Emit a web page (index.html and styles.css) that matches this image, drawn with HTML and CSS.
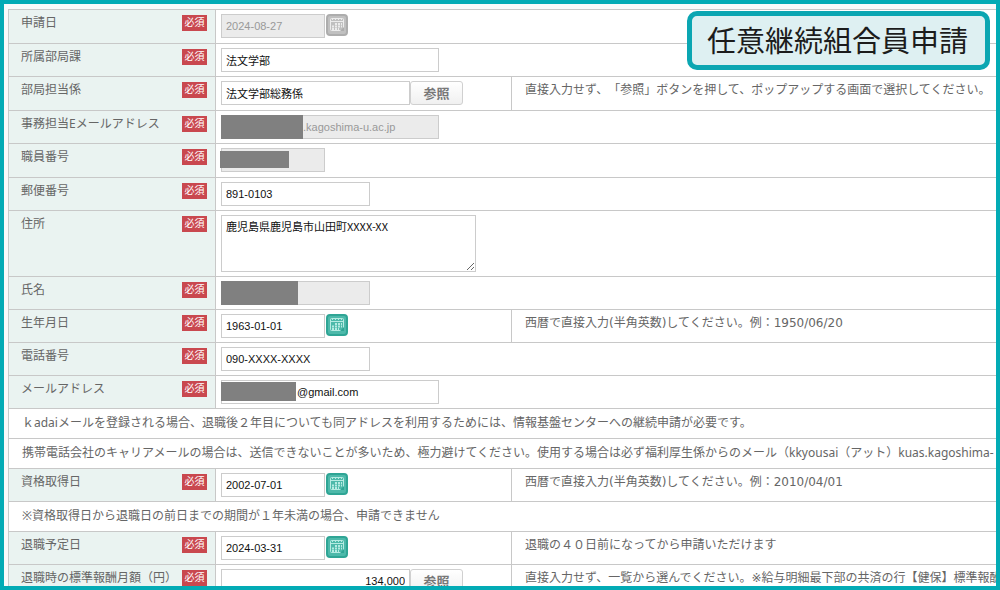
FILE: index.html
```html
<!DOCTYPE html>
<html lang="ja">
<head>
<meta charset="utf-8">
<title>任意継続組合員申請</title>
<link rel="stylesheet" href="styles.css">
</head>
<body>
<svg class="defs" aria-hidden="true">
  <symbol id="calendar" viewBox="0 0 22 22">
    <rect class="cal-edge" x="1" y="1" width="20" height="20" rx="3"/>
    <rect class="cal-face" x="4.5" y="4.5" width="13" height="12" rx="1"/>
    <path class="cal-line" d="M4 7.5h14M6.500 4v2M9.500 4v2M12.500 4v2M15.500 4v2"/>
    <path class="cal-days" d="M9 10h7M6 12.500h10M6 15h7"/>
    <path class="cal-corner" d="M18 13v4h-4z"/>
  </symbol>
</svg>
<main class="frame">
  <h1 class="title">任意継続組合員申請</h1>
  <form>
  <table class="form-table">
    <colgroup><col class="col-label"><col class="col-value"><col></colgroup>
    <tr class="tall">
      <th><div class="head"><label for="f1">申請日</label><span class="badge">必須</span></div></th>
      <td colspan="2"><div class="field"><input id="f1" class="w-date" value="2024-08-27" disabled><button type="button" class="cal" aria-label="カレンダー" disabled><svg><use href="#calendar"/></svg></button></div></td>
    </tr>
    <tr>
      <th><div class="head"><label for="f2">所属部局課</label><span class="badge">必須</span></div></th>
      <td colspan="2"><div class="field"><input id="f2" class="w-long" value="法文学部"></div></td>
    </tr>
    <tr class="tall">
      <th><div class="head"><label for="f3">部局担当係</label><span class="badge">必須</span></div></th>
      <td><div class="field"><input id="f3" class="w-ref" value="法文学部総務係"><button type="button" class="ref">参照</button></div></td>
      <td class="help">直接入力せず、「参照」ボタンを押して、ポップアップする画面で選択してください。</td>
    </tr>
    <tr>
      <th><div class="head"><label for="f4">事務担当Eメールアドレス</label><span class="badge">必須</span></div></th>
      <td colspan="2"><div class="field"><input id="f4" class="w-long after-mask" value=".kagoshima-u.ac.jp" disabled><span class="mask mask-l"></span></div></td>
    </tr>
    <tr class="tall">
      <th><div class="head"><label for="f5">職員番号</label><span class="badge">必須</span></div></th>
      <td colspan="2"><div class="field"><input id="f5" class="w-date" disabled><span class="mask mask-s"></span></div></td>
    </tr>
    <tr>
      <th><div class="head"><label for="f6">郵便番号</label><span class="badge">必須</span></div></th>
      <td colspan="2"><div class="field"><input id="f6" class="w-mid" value="891-0103"></div></td>
    </tr>
    <tr>
      <th><div class="head"><label for="f7">住所</label><span class="badge">必須</span></div></th>
      <td colspan="2"><div class="field"><textarea id="f7">鹿児島県鹿児島市山田町XXXX-XX</textarea></div></td>
    </tr>
    <tr>
      <th><div class="head"><label for="f8">氏名</label><span class="badge">必須</span></div></th>
      <td colspan="2"><div class="field"><input id="f8" class="w-mid" disabled><span class="mask mask-m"></span></div></td>
    </tr>
    <tr>
      <th><div class="head"><label for="f9">生年月日</label><span class="badge">必須</span></div></th>
      <td><div class="field"><input id="f9" class="w-date" value="1963-01-01"><button type="button" class="cal" aria-label="カレンダー"><svg><use href="#calendar"/></svg></button></div></td>
      <td class="help">西暦で直接入力(半角英数)してください。例：1950/06/20</td>
    </tr>
    <tr>
      <th><div class="head"><label for="f10">電話番号</label><span class="badge">必須</span></div></th>
      <td colspan="2"><div class="field"><input id="f10" class="w-mid" value="090-XXXX-XXXX"></div></td>
    </tr>
    <tr>
      <th><div class="head"><label for="f11">メールアドレス</label><span class="badge">必須</span></div></th>
      <td colspan="2"><div class="field"><input id="f11" class="w-long after-mask-m" value="@gmail.com"><span class="mask mask-mail"></span></div></td>
    </tr>
    <tr><td class="note" colspan="3">ｋadaiメールを登録される場合、退職後２年目についても同アドレスを利用するためには、情報基盤センターへの継続申請が必要です。</td></tr>
    <tr><td class="note" colspan="3">携帯電話会社のキャリアメールの場合は、送信できないことが多いため、極力避けてください。使用する場合は必ず福利厚生係からのメール（kkyousai（アット）kuas.kagoshima-</td></tr>
    <tr>
      <th><div class="head"><label for="f12">資格取得日</label><span class="badge">必須</span></div></th>
      <td><div class="field"><input id="f12" class="w-date" value="2002-07-01"><button type="button" class="cal" aria-label="カレンダー"><svg><use href="#calendar"/></svg></button></div></td>
      <td class="help">西暦で直接入力(半角英数)してください。例：2010/04/01</td>
    </tr>
    <tr><td class="note" colspan="3">※資格取得日から退職日の前日までの期間が１年未満の場合、申請できません</td></tr>
    <tr>
      <th><div class="head"><label for="f13">退職予定日</label><span class="badge">必須</span></div></th>
      <td><div class="field"><input id="f13" class="w-date" value="2024-03-31"><button type="button" class="cal" aria-label="カレンダー"><svg><use href="#calendar"/></svg></button></div></td>
      <td class="help">退職の４０日前になってから申請いただけます</td>
    </tr>
    <tr>
      <th><div class="head"><label for="f14">退職時の標準報酬月額（円）</label><span class="badge">必須</span></div></th>
      <td><div class="field"><input id="f14" class="w-ref amount" value="134,000"><button type="button" class="ref">参照</button></div></td>
      <td class="help">直接入力せず、一覧から選んでください。※給与明細最下部の共済の行【健保】標準報酬</td>
    </tr>
  </table>
  </form>
</main>
</body>
</html>
```

FILE: styles.css
```css
* { box-sizing: border-box; }
body {
  margin: 0;
  font: 12px/18px "Noto Sans", "Noto Sans CJK JP", sans-serif;
  text-spacing-trim: space-all;
  color: #666;
}
.defs { position: absolute; width: 0; height: 0; }
.frame {
  position: relative;
  height: 100vh;
  overflow: hidden;
  border: 4px solid #03abb5;
  padding: 5px 0 0 4px;
  background: #f9fafa;
}
.title {
  position: absolute;
  top: 7px;
  right: 6px;
  margin: 0;
  padding: 0 17px 3px 15px;
  border: 5px solid #0ba6b2;
  border-radius: 10px;
  background: #def0f2;
  color: #1c1c1c;
  font: 400 29px/46px "Noto Sans CJK JP", sans-serif;
}
.form-table {
  width: 100%;
  table-layout: fixed;
  border-collapse: collapse;
  background: #fff;
  border-left: 1px solid #c6cccc;
}
.col-label { width: 207px; }
.col-value { width: 296px; }
th, td {
  padding: 0;
  border-top: 1px solid #c8c8c8;
  vertical-align: top;
  text-align: left;
  font-weight: 400;
  white-space: nowrap;
}
th { background: #eaf3f1; border-right: 1px solid #c8c8c8; }
.head {
  display: flex;
  justify-content: space-between;
  align-items: flex-start;
  padding: 4px 8px 0 12px;
}
.badge {
  margin-top: 1px;
  width: 25px;
  padding-bottom: 1px;
  background: #c9484f;
  color: #fff;
  font-size: 10px;
  line-height: 15px;
  text-align: center;
}
.field { position: relative; display: flex; padding: 4px 0 4px 5px; }
.tall .field { padding-bottom: 5px; }
input, textarea {
  height: 24px;
  margin: 0;
  padding: 0 4px;
  border: 1px solid #ccc;
  border-radius: 0;
  background: #fff;
  color: #111;
  font: 11px/16px "Liberation Sans", "Noto Sans CJK JP", sans-serif;
}
input:disabled { background: #ebebeb; color: #999; }
textarea {
  width: 255px;
  height: 57px;
  padding: 2px 4px;
  font-family: "Noto Sans CJK JP", sans-serif;
}
.w-date { width: 104px; }
.w-mid { width: 149px; }
.w-ref { width: 189px; }
.w-long { width: 218px; }
.amount { text-align: right; }
.after-mask { padding-left: 81px; }
.after-mask-m { padding-left: 75px; }
.mask { position: absolute; top: 4px; left: 5px; height: 24px; background: #808080; }
.mask-l { width: 82px; }
.mask-m { width: 77px; }
.mask-s { top: 7px; left: 4px; width: 69px; height: 17px; }
.mask-mail { top: 6px; width: 75px; height: 19px; }
.ref {
  width: 53px;
  height: 24px;
  padding: 0;
  border: 1px solid #d0d0d0;
  border-radius: 3px;
  background: linear-gradient(#fff, #f0f0f0);
  color: #777;
  font: bold 13px/22px "Noto Sans CJK JP", sans-serif;
}
.cal { width: 22px; height: 22px; margin-left: 1px; padding: 0; border: 0; background: none; }
.cal svg { display: block; width: 22px; height: 22px; }
.cal { --edge: #2fa595; --face: #4db9aa; --ink: #b5ebe2; }
.cal:disabled { --edge: #adadad; --face: #c0c0c0; --ink: #ececec; }
.cal-edge { fill: var(--face); stroke: var(--edge); stroke-width: 2; }
.cal-face { fill: none; stroke: var(--ink); }
.cal-line { fill: none; stroke: var(--ink); }
.cal-days { fill: none; stroke: var(--ink); stroke-width: 2; stroke-dasharray: 2 1; }
.cal-corner { fill: var(--edge); }
.help {
  padding: 4px 0 0 13px;
  border-left: 1px solid #c8c8c8;
  font-family: "DejaVu Sans", "Noto Sans CJK JP", sans-serif;
}
.note { height: 30px; padding: 5px 0 6px 13px; }
```
